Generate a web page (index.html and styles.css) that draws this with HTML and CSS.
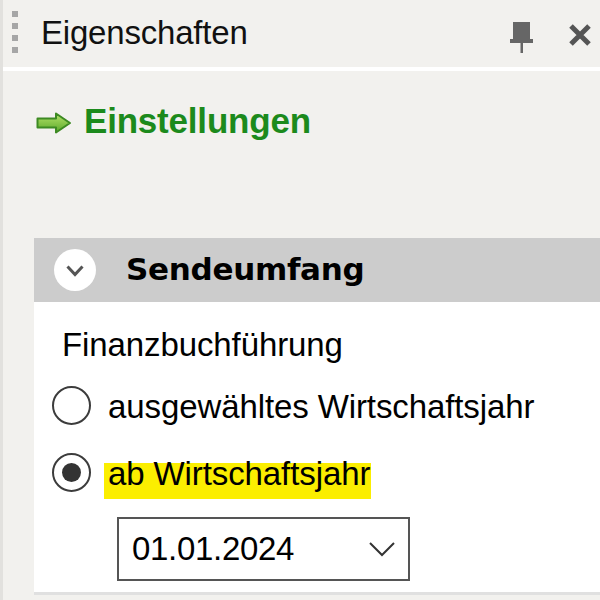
FILE: index.html
```html
<!DOCTYPE html>
<html lang="de">
<head>
<meta charset="utf-8">
<link rel="stylesheet" href="styles.css">
</head>
<body>
<div class="panel">
  <div class="titlebar">
    <div class="grip"><span></span><span></span><span></span><span></span></div>
    <div class="title">Eigenschaften</div>
    <svg class="pin" width="23" height="31" viewBox="0 0 23 31">
      <rect x="3" y="0" width="17" height="18" fill="#666"/>
      <rect x="0" y="17" width="23" height="4" fill="#666"/>
      <rect x="10.5" y="20" width="2.5" height="11" fill="#666"/>
    </svg>
    <svg class="close" width="24" height="24" viewBox="0 0 24 24">
      <path d="M3 3 L21 21 M21 3 L3 21" stroke="#555" stroke-width="5"/>
    </svg>
  </div>
  <div class="body">
    <div class="link">
      <svg class="arrow" width="36" height="22" viewBox="0 0 36 22">
        <defs>
          <linearGradient id="ag" x1="0" y1="0" x2="0" y2="1">
            <stop offset="0" stop-color="#b5e36a"/>
            <stop offset="1" stop-color="#5aa82a"/>
          </linearGradient>
        </defs>
        <path d="M1.5 6.5 H20 V1.5 L34 11 L20 20.5 V15.5 H1.5 Z" fill="url(#ag)" stroke="#3d8a22" stroke-width="2" stroke-linejoin="round"/>
      </svg>
      <span>Einstellungen</span>
    </div>
    <div class="section">
      <div class="section-head">
        <span class="toggle">
          <svg width="18" height="12" viewBox="0 0 18 12"><path d="M1.5 1.5 L9 9.5 L16.5 1.5" fill="none" stroke="#555" stroke-width="3"/></svg>
        </span>
        <span class="section-title">Sendeumfang</span>
      </div>
      <div class="section-body">
        <div class="label">Finanzbuchführung</div>
        <div class="radio-row"><span class="radio"></span><span class="rtext">ausgewähltes Wirtschaftsjahr</span></div>
        <div class="radio-row"><span class="radio checked"></span><span class="rtext hl">ab Wirtschaftsjahr</span></div>
        <div class="combo">
          <span class="combo-text">01.01.2024</span>
          <svg width="26" height="15" viewBox="0 0 26 15"><path d="M1 1 L13 13 L25 1" fill="none" stroke="#333" stroke-width="2"/></svg>
        </div>
      </div>
    </div>
  </div>
</div>
</body>
</html>
```
FILE: styles.css
```css
* { box-sizing: border-box; }
html, body { margin: 0; padding: 0; }
body {
  width: 600px; height: 600px; overflow: hidden;
  background: #f2f1ee;
  font-family: "Liberation Sans", Arial, sans-serif;
  color: #000;
}
.panel {
  height: 600px;
  border-left: 3px solid #e2e1de;
}
.titlebar {
  height: 71px;
  display: flex;
  align-items: center;
  border-bottom: 4px solid #ffffff;
  padding-left: 9px;
}
.grip {
  display: flex; flex-direction: column; gap: 6px;
  width: 29px;
  margin-top: -4px;
}
.grip span { width: 6px; height: 6px; background: #a6a6a6; display: block; }
.title {
  font-size: 33px;
  letter-spacing: -0.2px;
  color: #111;
  flex: 1;
  margin-bottom: 2px;
}
.pin { margin-right: 35px; margin-top: 8px; }
.close { margin-right: 8px; margin-top: 2px; }
.body { padding-left: 31px; }
.link {
  display: flex; align-items: center;
  height: 44px;
  margin-top: 28px;
  padding-left: 2px;
}
.arrow { margin-right: 12px; margin-top: 4px; }
.link span {
  font-size: 35px; font-weight: bold; color: #1c8a1c;
  letter-spacing: -0.2px;
}
.section { margin-top: 95px; }
.section-head {
  height: 64px; background: #cccccc;
  display: flex; align-items: center;
  padding-left: 20px;
}
.toggle {
  width: 42px; height: 42px; border-radius: 50%;
  background: #fff;
  display: flex; align-items: center; justify-content: center;
  margin-right: 30px;
  padding-top: 2px;
}
.section-title {
  font-family: "DejaVu Sans", sans-serif;
  font-weight: bold; font-size: 31px; color: #000;
  letter-spacing: -0.3px;
  margin-bottom: 2px;
}
.section-body {
  background: #fff;
  height: 293px;
  border-bottom: 3px solid #e0e0e0;
  padding-left: 18px;
  padding-top: 24px;
}
.label { font-size: 33px; line-height: 38px; padding-left: 10px; letter-spacing: -0.1px; }
.radio-row { display: flex; align-items: center; height: 67px; }
.radio-row:first-of-type { margin-top: 0; }
.label + .radio-row { margin-top: 8px; }
.radio {
  width: 39px; height: 39px; border-radius: 50%;
  border: 2.5px solid #3c3c3c; background: #fff;
  margin-right: 13px; position: relative;
  flex: none;
}
.radio.checked::after {
  content: ""; position: absolute; left: 7.5px; top: 7.5px;
  width: 19px; height: 19px; border-radius: 50%; background: #333;
}
.rtext {
  font-size: 33px; line-height: 38px; letter-spacing: -0.1px;
  padding-left: 4px;
  margin-top: 2px;
}
.rtext.hl {
  padding-bottom: 6px;
  padding-right: 1px;
  margin-top: 8px;
  background: linear-gradient(to bottom, transparent 0, transparent 8px, #fbee00 8px);
}
.combo {
  margin-left: 65px; margin-top: 11px;
  width: 293px; height: 64px;
  border: 2px solid #555;
  display: flex; align-items: center; justify-content: space-between;
  padding: 0 13px 0 13px;
}
.combo-text { font-size: 33px; letter-spacing: -0.3px; }
```
